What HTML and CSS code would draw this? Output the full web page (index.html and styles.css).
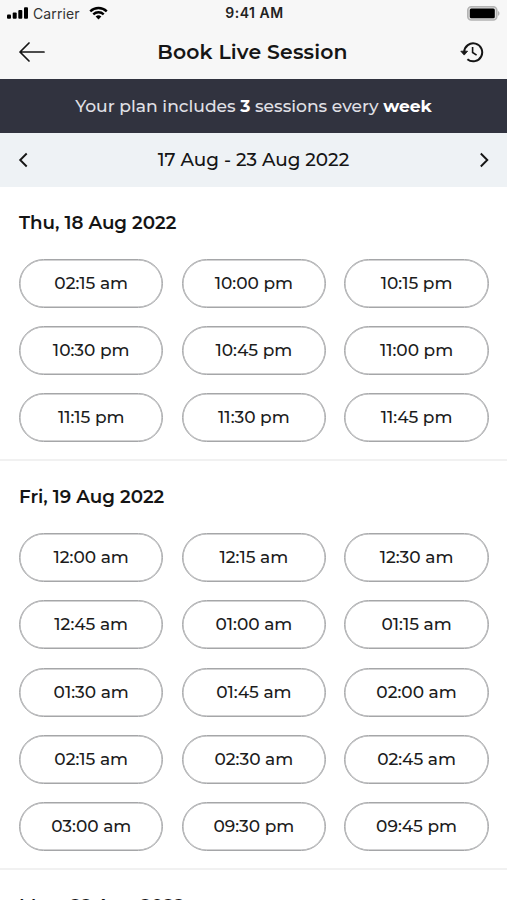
FILE: index.html
```html
<!DOCTYPE html>
<html lang="en">
  <head>
    <meta charset="UTF-8" />
    <meta name="viewport" content="width=device-width, initial-scale=1.0" />
    <title>Book Live Session</title>
    <link rel="stylesheet" href="styles.css">
  </head>

  <body>
    <header class="header">
      <div class="status-bar">
        <div class="status-left">
          <svg class="signal" width="21" height="12" viewBox="0 0 21 12">
            <rect x="0" y="7.4" width="4" height="4.4" rx="1" />
            <rect x="5.7" y="5.4" width="4" height="6.4" rx="1" />
            <rect x="11.3" y="3" width="4" height="8.8" rx="1" />
            <rect x="17" y="0.3" width="4" height="11.5" rx="1" />
          </svg>
          <span class="carrier">Carrier</span>
          <svg class="wifi" width="19" height="14" viewBox="0 0 20 14" fill="none" stroke="#000" stroke-width="2.5">
            <path d="M1.3 5.2a12.6 12.6 0 0 1 17.4 0" />
            <path d="M4.5 8.4a8 8 0 0 1 11 0" />
            <path d="M7 10.8a4.3 4.3 0 0 1 6 0L10 13.8z" fill="#000" stroke="none" />
          </svg>
        </div>
        <span class="clock">9:41 AM</span>
        <div class="status-right">
          <svg width="33" height="15" viewBox="0 0 33 15">
            <rect x="0.8" y="0.8" width="29" height="13.2" rx="3.5" fill="#ddd" stroke="#b4b4b4" stroke-width="1.6" />
            <rect x="2.8" y="2.6" width="25" height="9.6" rx="1.5" fill="#000" />
            <path d="M31 5c2 .8 2 4 0 4.8z" fill="#b4b4b4" />
          </svg>
        </div>
      </div>
      <div class="nav-bar">
        <svg class="back" width="26" height="20" viewBox="0 0 26 20" fill="none" stroke="#151515" stroke-width="1.7" stroke-linecap="round" stroke-linejoin="round">
          <path d="M10 1L1 10l9 9M1 10h24" />
        </svg>
        <h1 class="title">Book Live Session</h1>
        <svg class="history" width="24" height="22" viewBox="0 0 24 22" fill="none" stroke="#151515" stroke-width="2">
          <path d="M4.2 11a9 9 0 1 1 3.2 7.2" />
          <path d="M12.6 6v5.5l4 2.7" stroke-width="1.6" />
          <path d="M.8 10.2h6.8l-3.4 3.9z" fill="#151515" stroke="#151515" stroke-width="0.8" stroke-linejoin="round" />
        </svg>
      </div>
    </header>

    <div class="plan"><span>Your plan includes <b>3</b> sessions every <b>week</b></span></div>

    <div class="week">
      <svg width="10" height="16" viewBox="0 0 10 16" fill="none" stroke="#151515" stroke-width="1.9">
        <path d="M8.7 1.5L2.2 8l6.5 6.5" />
      </svg>
      <span class="week-range">17 Aug - 23 Aug 2022</span>
      <svg width="10" height="16" viewBox="0 0 10 16" fill="none" stroke="#151515" stroke-width="1.9">
        <path d="M1.8 1.5L8.3 8l-6.5 6.5" />
      </svg>
    </div>

    <main>
      <section class="day">
        <h2 class="day-title">Thu, 18 Aug 2022</h2>
        <div class="slots">
          <button class="slot">02:15 am</button>
          <button class="slot">10:00 pm</button>
          <button class="slot">10:15 pm</button>
          <button class="slot">10:30 pm</button>
          <button class="slot">10:45 pm</button>
          <button class="slot">11:00 pm</button>
          <button class="slot">11:15 pm</button>
          <button class="slot">11:30 pm</button>
          <button class="slot">11:45 pm</button>
        </div>
      </section>

      <section class="day">
        <h2 class="day-title">Fri, 19 Aug 2022</h2>
        <div class="slots">
          <button class="slot">12:00 am</button>
          <button class="slot">12:15 am</button>
          <button class="slot">12:30 am</button>
          <button class="slot">12:45 am</button>
          <button class="slot">01:00 am</button>
          <button class="slot">01:15 am</button>
          <button class="slot">01:30 am</button>
          <button class="slot">01:45 am</button>
          <button class="slot">02:00 am</button>
          <button class="slot">02:15 am</button>
          <button class="slot">02:30 am</button>
          <button class="slot">02:45 am</button>
          <button class="slot">03:00 am</button>
          <button class="slot">09:30 pm</button>
          <button class="slot">09:45 pm</button>
        </div>
      </section>

      <section class="day">
        <h2 class="day-title">Mon, 22 Aug 2022</h2>
      </section>
    </main>
  </body>
</html>
```
FILE: styles.css
```css
* {
  box-sizing: border-box;
}

body {
  margin: 0;
  height: 900px;
  overflow: hidden;
  background-color: #fff;
  color: #151515;
  font-family: Montserrat, Inter, sans-serif;
}

svg {
  display: block;
  flex: none;
}

.header {
  height: 79px;
  background-color: #f7f7f7;
}

.status-bar {
  display: grid;
  grid-template-columns: 1fr auto 1fr;
  align-items: center;
  height: 26px;
  padding: 0 7px;
  font-family: Inter, sans-serif;
  font-size: 14px;
  color: #000;
}

.status-left {
  display: flex;
  align-items: center;
  height: 25px;
}

.carrier {
  margin-left: 5px;
  margin-right: 9px;
  color: #333;
  letter-spacing: 0.1px;
}

.clock {
  padding-left: 2px;
  font-size: 14px;
  font-weight: 600;
  letter-spacing: 0.5px;
  line-height: 24px;
  color: #222;
}

.status-right {
  display: flex;
  justify-content: flex-end;
}

.nav-bar {
  display: flex;
  align-items: center;
  justify-content: space-between;
  height: 52px;
  padding: 0 23px 1px 19px;
}

.title {
  margin: 0;
  font-size: 20.4px;
  font-weight: 600;
  letter-spacing: 0.15px;
}

.plan {
  display: flex;
  align-items: center;
  justify-content: center;
  height: 54px;
  padding-bottom: 2px;
  background-color: #31333f;
  color: #e0e0e6;
  font-size: 17.15px;
  font-weight: 500;
}

.plan b {
  color: #fff;
  font-weight: 700;
}

.week {
  display: flex;
  align-items: center;
  justify-content: space-between;
  height: 53.5px;
  padding: 0 18px;
  background-color: #eef2f5;
}

.week-range {
  font-size: 18.4px;
  font-weight: 500;
}

.day {
  padding: 0 18.25px 17px 19px;
  border-bottom: 2px solid #f1f1f1;
}

.day-title {
  margin: 0;
  height: 72px;
  line-height: 72px;
  font-size: 18.3px;
  font-weight: 600;
}

.slots {
  display: grid;
  grid-template-columns: repeat(3, 1fr);
  grid-auto-rows: 49px;
  gap: 18.25px;
}

.slot {
  padding: 0 0 1px;
  border: 1px solid #a5a6a8;
  border-radius: 25px;
  box-shadow: inset 0 0 0 0.5px #a5a6a8;
  background-color: #fff;
  color: #1c1c1c;
  font-family: inherit;
  font-size: 17px;
  font-weight: 500;
}
```
